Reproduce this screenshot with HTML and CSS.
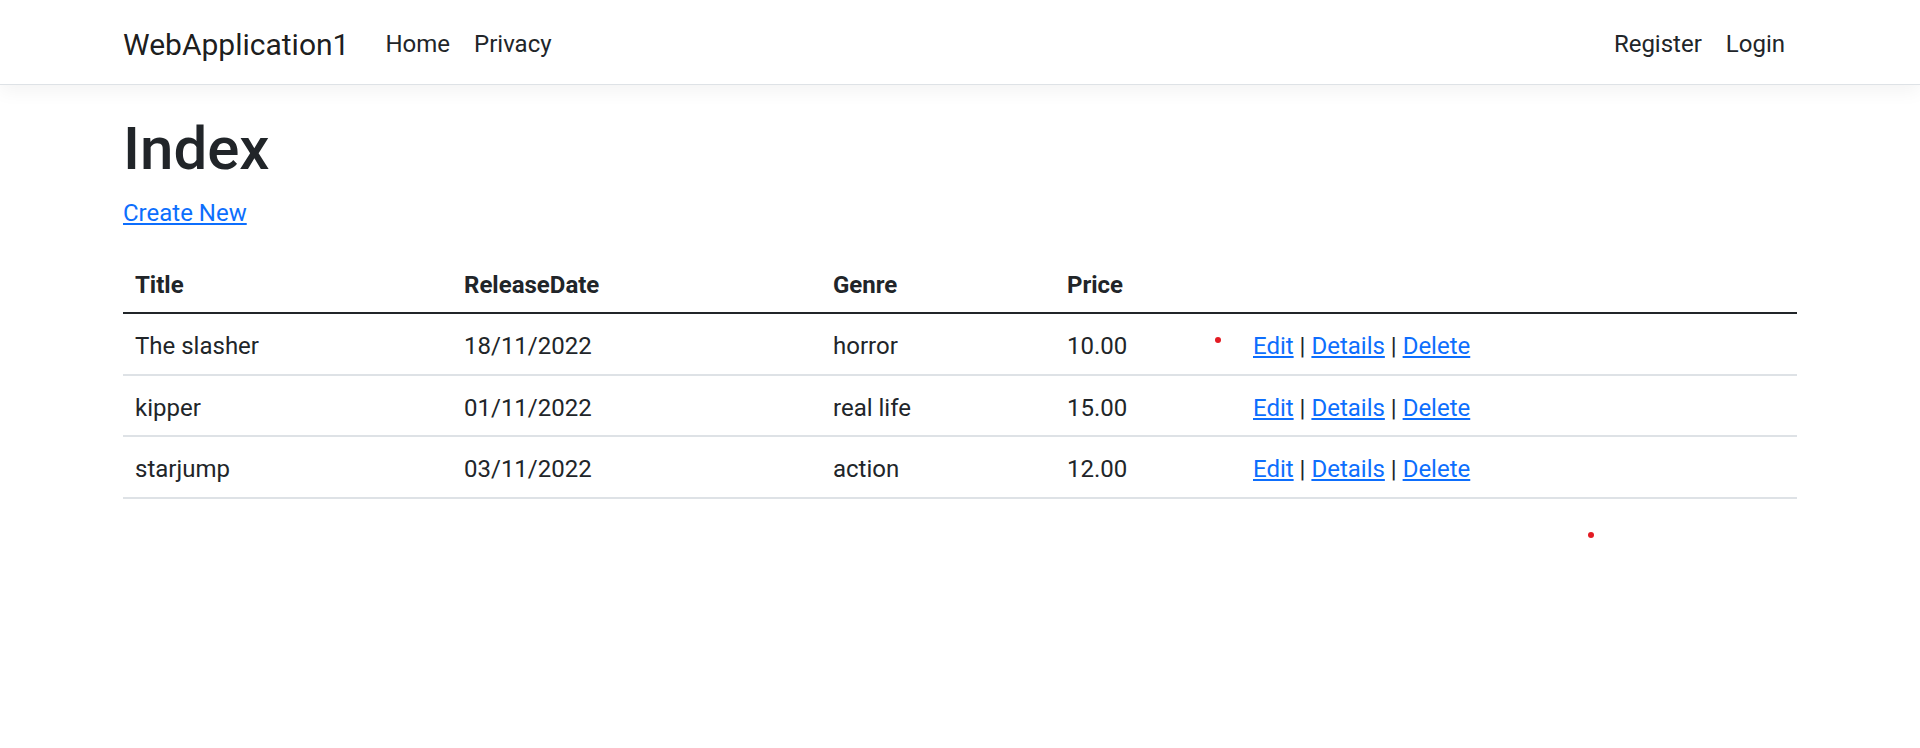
FILE: index.html
```html
<!DOCTYPE html>
<html lang="en">
<head>
<meta charset="utf-8">
<title>Index - WebApplication1</title>
<link rel="stylesheet" href="styles.css">
</head>
<body>
<header>
  <nav class="navbar">
    <div class="container nav-inner">
      <a class="brand" href="#">WebApplication1</a>
      <ul class="nav-list">
        <li><a class="nav-link" href="#">Home</a></li>
        <li><a class="nav-link" href="#">Privacy</a></li>
      </ul>
      <ul class="nav-list nav-right">
        <li><a class="nav-link" href="#">Register</a></li>
        <li><a class="nav-link" href="#">Login</a></li>
      </ul>
    </div>
  </nav>
</header>
<div class="container">
  <main class="main">
    <h1 class="page-title">Index</h1>
    <p class="create"><a class="link" href="#">Create New</a></p>
    <table class="table">
      <colgroup>
        <col class="col-title">
        <col class="col-date">
        <col class="col-genre">
        <col class="col-price">
        <col class="col-actions">
      </colgroup>
      <thead>
        <tr>
          <th>Title</th>
          <th>ReleaseDate</th>
          <th>Genre</th>
          <th>Price</th>
          <th></th>
        </tr>
      </thead>
      <tbody>
        <tr>
          <td>The slasher</td>
          <td>18/11/2022</td>
          <td>horror</td>
          <td>10.00</td>
          <td><a class="link" href="#">Edit</a> | <a class="link" href="#">Details</a> | <a class="link" href="#">Delete</a></td>
        </tr>
        <tr>
          <td>kipper</td>
          <td>01/11/2022</td>
          <td>real life</td>
          <td>15.00</td>
          <td><a class="link" href="#">Edit</a> | <a class="link" href="#">Details</a> | <a class="link" href="#">Delete</a></td>
        </tr>
        <tr>
          <td>starjump</td>
          <td>03/11/2022</td>
          <td>action</td>
          <td>12.00</td>
          <td><a class="link" href="#">Edit</a> | <a class="link" href="#">Details</a> | <a class="link" href="#">Delete</a></td>
        </tr>
      </tbody>
    </table>
  </main>
</div>
<span class="dot dot-1"></span>
<span class="dot dot-2"></span>
</body>
</html>
```

FILE: styles.css
```css
* {
  box-sizing: border-box;
}

html,
body {
  margin: 0;
  padding: 0;
}

body {
  font-family: Roboto, "Liberation Sans", sans-serif;
  font-size: 24px;
  line-height: 36px;
  color: #212529;
  background: #fff;
  position: relative;
  min-height: 748px;
}

.container {
  width: 1698px;
  margin: 0 auto;
  padding: 0 12px;
}

/* Navbar */
.navbar {
  background: #fff;
  padding: 12px 0;
  border-bottom: 1px solid #dee2e6;
  box-shadow: 0 6px 18px rgba(0, 0, 0, 0.05);
  margin-bottom: 24px;
}

.nav-inner {
  display: flex;
  align-items: center;
}

.brand {
  font-size: 30px;
  line-height: 45px;
  padding: 9.7px 0 5.3px;
  margin-right: 24px;
  color: rgba(0, 0, 0, 0.9);
  text-decoration: none;
}

.nav-list {
  display: flex;
  list-style: none;
  margin: 0;
  padding: 0;
}

.nav-right {
  margin-left: auto;
}

.nav-link {
  display: block;
  padding: 13.7px 12px 10.3px;
  font-size: 24px;
  line-height: 36px;
  color: #212529;
  text-decoration: none;
}

/* Main */
.main {
  padding-bottom: 24px;
}

.page-title {
  margin: 0 0 7.7px;
  padding-top: 4.3px;
  font-size: 60px;
  font-weight: 500;
  line-height: 72px;
}

.create {
  margin: 0 0 22.3px;
  padding-top: 1.7px;
}

.link {
  color: #0d6efd;
  text-decoration: underline;
}

/* Table */
.table {
  width: 100%;
  border-collapse: collapse;
  table-layout: fixed;
  margin-bottom: 24px;
  color: #212529;
}

.col-title { width: 329px; }
.col-date { width: 369px; }
.col-genre { width: 234px; }
.col-price { width: 186px; }
.col-actions { width: 556px; }

.table th,
.table td {
  padding: 13.7px 12px 9.8px;
  text-align: left;
  border-bottom: 2px solid #dee2e6;
  vertical-align: top;
}

.table th {
  font-weight: 700;
  vertical-align: bottom;
  border-bottom-color: #212529;
}

/* stray red markers */
.dot {
  position: absolute;
  width: 6px;
  height: 6px;
  border-radius: 50%;
  background: #e31b23;
}

.dot-1 {
  left: 1215px;
  top: 337px;
}

.dot-2 {
  left: 1588px;
  top: 532px;
}
```
